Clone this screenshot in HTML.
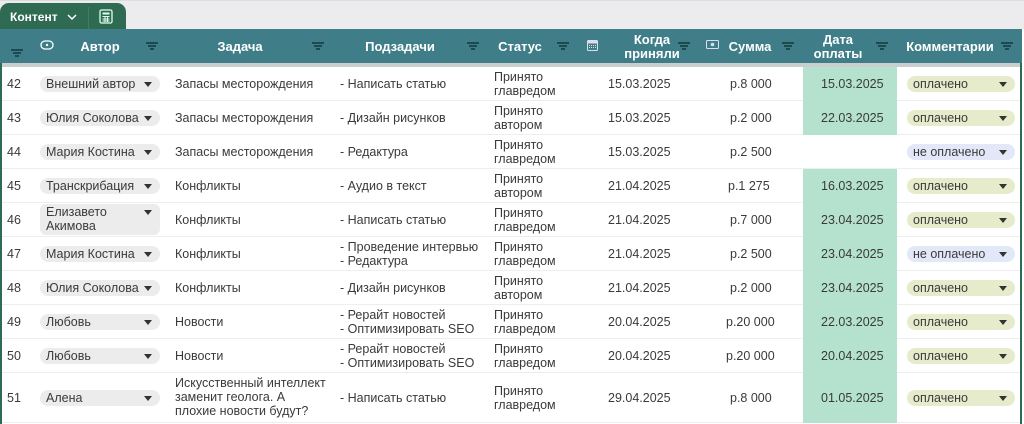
<!DOCTYPE html>
<html><head><meta charset="utf-8"><style>
*{margin:0;padding:0;box-sizing:border-box}
body{width:1024px;height:424px;overflow:hidden;background:#fff;font-family:"Liberation Sans",sans-serif;font-size:12.5px;color:#3a3a3a;position:relative}
.top{position:absolute;left:0;top:0;width:1024px;height:29px;background:#ececee;border-top:1px solid #ddd}
.tab{position:absolute;left:0;top:3px;width:126px;height:27px;background:#2f6b52;border-radius:9px 9px 0 0}
.tab .t{position:absolute;left:10px;top:7px;color:#fff;font-weight:bold;font-size:12px}
.tab .sep{position:absolute;left:88px;top:4px;width:1px;height:22px;background:#3f7c62}
.hdr{position:absolute;left:0;top:29px;width:1022px;height:34px;background:#3f7e88}
.shadow{position:absolute;left:0;top:63px;width:1022px;height:4px;background:#c9cfcf}
.h{position:absolute;color:#fff;font-weight:bold;font-size:13px;text-align:center;line-height:14px}
.f{position:absolute;width:12px;height:8px}
.f:before,.f:after,.f i{content:"";position:absolute;left:0;height:1.5px;background:#1d4a50}
.f:before{top:0;width:12px}.f i{top:3px;left:2px;width:8px}.f:after{top:6px;left:4px;width:4px}
.row{position:absolute;left:2px;width:1018px;height:34px;border-bottom:1px solid #eee}
.c{position:absolute;line-height:14px}
.pill{position:absolute;left:38px;width:120px;height:16px;border-radius:8px;background:#ececec;padding-left:6px;line-height:16px}
.pill:after,.cm:after{content:"";position:absolute;right:8px;top:6px;border:4px solid transparent;border-top:5px solid #333;border-bottom:0}
.gr{position:absolute;left:801px;width:94px;height:34px;background:#b4e2ce}
.cm{position:absolute;left:905px;width:108px;height:16px;border-radius:8px;line-height:16px;padding-left:6px;background:#e6ebcc}
.cm.n{background:#e3e8f8}
.lb{position:absolute;left:0;top:63px;width:2px;height:361px;background:#2f6b52}
.rb{position:absolute;left:1020px;top:63px;width:2px;height:361px;background:#2f6b52}
</style></head><body>
<div class="top"></div>
<div class="tab"><span class="t">Контент</span><svg style="position:absolute;left:67px;top:11px" width="10" height="7"><path d="M1 1l4 4 4-4" stroke="#fff" stroke-width="1.5" fill="none"/></svg><div class="sep"></div><svg style="position:absolute;left:99px;top:6px" width="14" height="15"><rect x="1" y="1" width="12" height="13" rx="1.5" fill="none" stroke="#dfe" stroke-width="1.3"/><rect x="3.5" y="3.5" width="7" height="2" fill="#dfe"/><path d="M3.5 7.5h7M3.5 10h7M3.5 12h7M6 7v6M8.5 7v6" stroke="#dfe" stroke-width="1"/></svg></div>
<div class="hdr">
<div class="f" style="left:11px;top:20px"><i></i></div>
<svg style="position:absolute;left:40px;top:11px" width="14" height="10"><rect x="1" y="1" width="12" height="8" rx="4" fill="none" stroke="#fff" stroke-width="1.3"/><circle cx="7" cy="5" r="1.2" fill="#fff"/></svg>
<div class="h" style="left:70px;top:11px;width:60px">Автор</div><div class="f" style="left:146px;top:13px"><i></i></div>
<div class="h" style="left:205px;top:11px;width:70px">Задача</div><div class="f" style="left:312px;top:13px"><i></i></div>
<div class="h" style="left:355px;top:11px;width:90px">Подзадачи</div><div class="f" style="left:467px;top:13px"><i></i></div>
<div class="h" style="left:495px;top:11px;width:50px">Статус</div><div class="f" style="left:557px;top:13px"><i></i></div>
<svg style="position:absolute;left:587px;top:10px" width="11" height="12"><rect x="0.5" y="1.5" width="10" height="10" rx="1" fill="none" stroke="#dde" stroke-width="1"/><rect x="0.5" y="1.5" width="10" height="3" fill="#dde"/><path d="M2 6.5h7M2 8.5h7" stroke="#dde" stroke-dasharray="1 1"/></svg>
<div class="h" style="left:622px;top:4px;width:60px">Когда<br>приняли</div><div class="f" style="left:678px;top:13px"><i></i></div>
<svg style="position:absolute;left:706px;top:11px" width="13" height="9"><rect x="0.5" y="0.5" width="12" height="8" rx="1" fill="none" stroke="#dde"/><circle cx="6.5" cy="4.5" r="1.8" fill="#dde"/></svg>
<div class="h" style="left:725px;top:11px;width:50px">Сумма</div><div class="f" style="left:782px;top:13px"><i></i></div>
<div class="h" style="left:808px;top:4px;width:60px">Дата<br>оплаты</div><div class="f" style="left:876px;top:13px"><i></i></div>
<div class="h" style="left:900px;top:11px;width:100px">Комментарии</div><div class="f" style="left:1001px;top:13px"><i></i></div>
</div>
<div class="shadow"></div>

<div class="row" style="top:67px"><div class="c" style="left:5px;top:10px">42</div><div class="pill" style="top:9px">Внешний автор</div><div class="c" style="left:173px;top:10px">Запасы месторождения</div><div class="c" style="left:338px;top:10px">- Написать статью</div><div class="c" style="left:492px;top:3px">Принято<br>главредом</div><div class="c" style="left:606px;top:10px">15.03.2025</div><div class="c" style="left:728px;top:10px">р.8 000</div><div class="gr" style="top:0"></div><div class="c" style="left:819px;top:10px">15.03.2025</div><div class="cm" style="top:9px">оплачено</div></div>
<div class="row" style="top:101px"><div class="c" style="left:5px;top:10px">43</div><div class="pill" style="top:9px">Юлия Соколова</div><div class="c" style="left:173px;top:10px">Запасы месторождения</div><div class="c" style="left:338px;top:10px">- Дизайн рисунков</div><div class="c" style="left:492px;top:3px">Принято<br>автором</div><div class="c" style="left:606px;top:10px">15.03.2025</div><div class="c" style="left:728px;top:10px">р.2 000</div><div class="gr" style="top:0"></div><div class="c" style="left:819px;top:10px">22.03.2025</div><div class="cm" style="top:9px">оплачено</div></div>
<div class="row" style="top:135px"><div class="c" style="left:5px;top:10px">44</div><div class="pill" style="top:9px">Мария Костина</div><div class="c" style="left:173px;top:10px">Запасы месторождения</div><div class="c" style="left:338px;top:10px">- Редактура</div><div class="c" style="left:492px;top:3px">Принято<br>главредом</div><div class="c" style="left:606px;top:10px">15.03.2025</div><div class="c" style="left:728px;top:10px">р.2 500</div><div class="cm n" style="top:9px">не оплачено</div></div>
<div class="row" style="top:169px"><div class="c" style="left:5px;top:10px">45</div><div class="pill" style="top:9px">Транскрибация</div><div class="c" style="left:173px;top:10px">Конфликты</div><div class="c" style="left:338px;top:10px">- Аудио в текст</div><div class="c" style="left:492px;top:3px">Принято<br>автором</div><div class="c" style="left:606px;top:10px">21.04.2025</div><div class="c" style="left:726px;top:10px">р.1 275</div><div class="gr" style="top:0"></div><div class="c" style="left:819px;top:10px">16.03.2025</div><div class="cm" style="top:9px">оплачено</div></div>
<div class="row" style="top:203px"><div class="c" style="left:5px;top:10px">46</div><div class="pill" style="top:1px;height:31px;line-height:14px;padding-top:1px;border-radius:6px">Елизавето<br>Акимова</div><div class="c" style="left:173px;top:10px">Конфликты</div><div class="c" style="left:338px;top:10px">- Написать статью</div><div class="c" style="left:492px;top:3px">Принято<br>главредом</div><div class="c" style="left:606px;top:10px">21.04.2025</div><div class="c" style="left:728px;top:10px">р.7 000</div><div class="gr" style="top:0"></div><div class="c" style="left:819px;top:10px">23.04.2025</div><div class="cm" style="top:9px">оплачено</div></div>
<div class="row" style="top:237px"><div class="c" style="left:5px;top:10px">47</div><div class="pill" style="top:9px">Мария Костина</div><div class="c" style="left:173px;top:10px">Конфликты</div><div class="c" style="left:338px;top:3px">- Проведение интервью<br>- Редактура</div><div class="c" style="left:492px;top:3px">Принято<br>главредом</div><div class="c" style="left:606px;top:10px">21.04.2025</div><div class="c" style="left:728px;top:10px">р.2 500</div><div class="gr" style="top:0"></div><div class="c" style="left:819px;top:10px">23.04.2025</div><div class="cm n" style="top:9px">не оплачено</div></div>
<div class="row" style="top:271px"><div class="c" style="left:5px;top:10px">48</div><div class="pill" style="top:9px">Юлия Соколова</div><div class="c" style="left:173px;top:10px">Конфликты</div><div class="c" style="left:338px;top:10px">- Дизайн рисунков</div><div class="c" style="left:492px;top:3px">Принято<br>автором</div><div class="c" style="left:606px;top:10px">21.04.2025</div><div class="c" style="left:728px;top:10px">р.2 000</div><div class="gr" style="top:0"></div><div class="c" style="left:819px;top:10px">23.04.2025</div><div class="cm" style="top:9px">оплачено</div></div>
<div class="row" style="top:305px"><div class="c" style="left:5px;top:10px">49</div><div class="pill" style="top:9px">Любовь</div><div class="c" style="left:173px;top:10px">Новости</div><div class="c" style="left:338px;top:3px">- Рерайт новостей<br>- Оптимизировать SEO</div><div class="c" style="left:492px;top:3px">Принято<br>главредом</div><div class="c" style="left:606px;top:10px">20.04.2025</div><div class="c" style="left:724px;top:10px">р.20 000</div><div class="gr" style="top:0"></div><div class="c" style="left:819px;top:10px">22.03.2025</div><div class="cm" style="top:9px">оплачено</div></div>
<div class="row" style="top:339px"><div class="c" style="left:5px;top:10px">50</div><div class="pill" style="top:9px">Любовь</div><div class="c" style="left:173px;top:10px">Новости</div><div class="c" style="left:338px;top:3px">- Рерайт новостей<br>- Оптимизировать SEO</div><div class="c" style="left:492px;top:3px">Принято<br>главредом</div><div class="c" style="left:606px;top:10px">20.04.2025</div><div class="c" style="left:724px;top:10px">р.20 000</div><div class="gr" style="top:0"></div><div class="c" style="left:819px;top:10px">20.04.2025</div><div class="cm" style="top:9px">оплачено</div></div>
<div class="row" style="top:373px;height:50px"><div class="c" style="left:5px;top:18px">51</div><div class="pill" style="top:17px">Алена</div><div class="c" style="left:173px;top:3px">Искусственный интеллект<br>заменит геолога. А<br>плохие новости будут?</div><div class="c" style="left:338px;top:18px">- Написать статью</div><div class="c" style="left:492px;top:11px">Принято<br>главредом</div><div class="c" style="left:606px;top:18px">29.04.2025</div><div class="c" style="left:728px;top:18px">р.8 000</div><div class="gr" style="top:0;height:50px"></div><div class="c" style="left:819px;top:18px">01.05.2025</div><div class="cm" style="top:17px">оплачено</div></div>
<div class="lb"></div><div class="rb"></div>
</body></html>
